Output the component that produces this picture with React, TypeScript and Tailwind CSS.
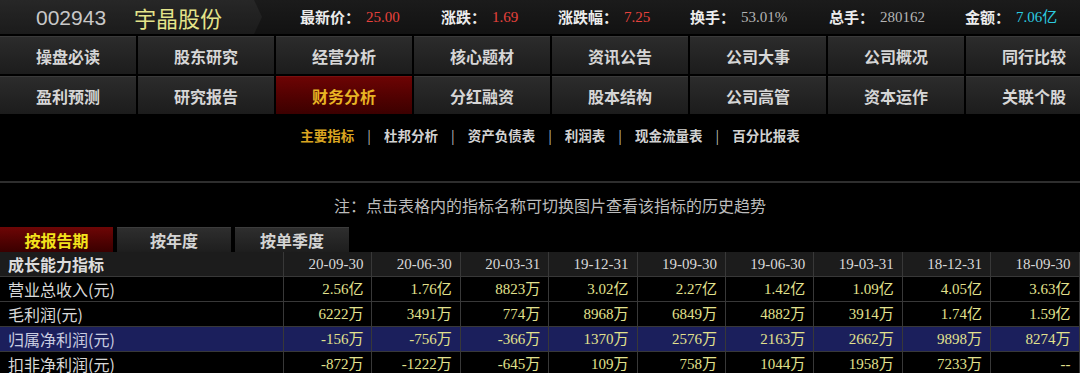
import React from "react";

const stats = [
  { label: "最新价：", value: "25.00", color: "text-[#e8423c]", w: "w-[141px]" },
  { label: "涨跌：", value: "1.69", color: "text-[#e8423c]", w: "w-[117px]" },
  { label: "涨跌幅：", value: "7.25", color: "text-[#e8423c]", w: "w-[132px]" },
  { label: "换手：", value: "53.01%", color: "text-[#b4b4b4]", w: "w-[139px]" },
  { label: "总手：", value: "280162", color: "text-[#b4b4b4]", w: "w-[136px]" },
  { label: "金额：", value: "7.06亿", color: "text-[#2ccbe0]", w: "w-[115px]" },
];

const navRows = [
  ["操盘必读", "股东研究", "经营分析", "核心题材", "资讯公告", "公司大事", "公司概况", "同行比较"],
  ["盈利预测", "研究报告", "财务分析", "分红融资", "股本结构", "公司高管", "资本运作", "关联个股"],
];

const subNav = ["主要指标", "杜邦分析", "资产负债表", "利润表", "现金流量表", "百分比报表"];

const tabs = ["按报告期", "按年度", "按单季度"];

const dates = ["20-09-30", "20-06-30", "20-03-31", "19-12-31", "19-09-30", "19-06-30", "19-03-31", "18-12-31", "18-09-30"];

const rows = [
  { name: "营业总收入(元)", values: ["2.56亿", "1.76亿", "8823万", "3.02亿", "2.27亿", "1.42亿", "1.09亿", "4.05亿", "3.63亿"] },
  { name: "毛利润(元)", values: ["6222万", "3491万", "774万", "8968万", "6849万", "4882万", "3914万", "1.74亿", "1.59亿"] },
  { name: "归属净利润(元)", values: ["-156万", "-756万", "-366万", "1370万", "2576万", "2163万", "2662万", "9898万", "8274万"], active: true },
  { name: "扣非净利润(元)", values: ["-872万", "-1222万", "-645万", "109万", "758万", "1044万", "1958万", "7233万", "--"] },
];

const cjk = "font-['Noto_Sans_CJK_SC',sans-serif]";
const serif = "font-['Liberation_Serif','Noto_Sans_CJK_SC',serif]";

export default function App() {
  return (
    <div className={`w-[1080px] h-[373px] overflow-hidden bg-black ${cjk}`}>
      <div className="w-[1100px]">
        {/* Header */}
        <div className="h-[34px] flex bg-gradient-to-b from-[#1b1b1b] to-[#121212]">
          <div className="w-[262px] h-full flex items-center bg-gradient-to-b from-[#272727] to-[#1b1b1b] [clip-path:polygon(0_0,254px_0,262px_50%,254px_100%,0_100%)]">
            <span className="ml-[36px] text-[21px] leading-none text-[#c8c8c8] font-['Liberation_Sans',sans-serif]">002943</span>
            <span className="ml-[28px] text-[22px] leading-none text-[#e4e48a]">宇晶股份</span>
          </div>
          <div className="flex items-center pl-[38px]">
            {stats.map((s) => (
              <div key={s.label} className={`${s.w} flex items-center`}>
                <span className="text-[15px] font-bold text-[#ececec]">{s.label}</span>
                <span className={`ml-[6px] text-[15px] ${serif} ${s.color}`}>{s.value}</span>
              </div>
            ))}
          </div>
        </div>

        {/* Nav buttons */}
        <div className="mt-[2px] flex flex-col gap-[2px]">
          {navRows.map((row, i) => (
            <div key={i} className="grid grid-cols-[repeat(8,136px)] gap-x-[2px]">
              {row.map((t) => {
                const active = t === "财务分析";
                return (
                  <div
                    key={t}
                    className={
                      active
                        ? "h-[38px] flex items-center justify-center bg-gradient-to-b from-[#6c0404] to-[#3c0000] border-t border-[#7a1010] text-[16px] font-semibold text-[#e8b424]"
                        : "h-[38px] flex items-center justify-center bg-gradient-to-b from-[#2c2c2c] to-[#1c1c1c] border-t border-[#3a3a3a] text-[16px] font-semibold text-[#d6d6d6]"
                    }
                  >
                    {t}
                  </div>
                );
              })}
            </div>
          ))}
        </div>

        {/* Sub nav */}
        <div className="h-[67px] flex items-start justify-center gap-[13px] pt-[11px] text-[13.5px] font-bold">
          {subNav.map((t, i) => (
            <React.Fragment key={t}>
              {i > 0 && <span className="text-[#bdbdbd] font-normal">|</span>}
              <span className={i === 0 ? "text-[#d9a520]" : "text-[#d2d2d2]"}>{t}</span>
            </React.Fragment>
          ))}
        </div>
        <div className="h-[2px] bg-[#2e2e2e]" />

        {/* Note */}
        <div className="h-[44px] flex items-center justify-center text-[16px] text-[#bcbcbc]">
          注：点击表格内的指标名称可切换图片查看该指标的历史趋势
        </div>
      </div>

      {/* Tabs */}
      <div className="flex gap-[4px] h-[25px]">
        {tabs.map((t, i) => (
          <div
            key={t}
            className={
              i === 0
                ? "w-[113px] flex items-center justify-center bg-gradient-to-b from-[#6e0606] to-[#3a0000] text-[16px] font-bold text-[#f2e21c]"
                : "w-[114px] flex items-center justify-center bg-gradient-to-b from-[#2e2e2e] to-[#1e1e1e] border-t border-[#3c3c3c] text-[16px] font-bold text-[#d4d4d4]"
            }
          >
            {t}
          </div>
        ))}
      </div>

      {/* Table */}
      <div className="w-[1100px]">
        <div className="grid grid-cols-[284px_repeat(9,88.4px)] h-[25px] bg-[#1c1c1c] border-b border-[#383838]">
          <div className="flex items-center pl-[8px] text-[16px] font-bold text-[#dcdcdc] border-r border-[#383838]">成长能力指标</div>
          {dates.map((d) => (
            <div key={d} className={`flex items-center justify-end pr-[8px] text-[15px] ${serif} text-[#d8d8d8] border-r border-[#383838]`}>
              {d}
            </div>
          ))}
        </div>
        {rows.map((r) => (
          <div
            key={r.name}
            className={`grid grid-cols-[284px_repeat(9,88.4px)] h-[25px] border-b border-[#383838] ${r.active ? "bg-[#1b1f5c]" : "bg-black"}`}
          >
            <div className={`flex items-center pl-[8px] text-[16px] border-r border-[#383838] ${r.active ? "text-[#c9cce0]" : "text-[#d8d8d8]"}`}>
              {r.name}
            </div>
            {r.values.map((v, j) => (
              <div key={j} className={`flex items-center justify-end pr-[8px] text-[15px] ${serif} text-[#e2e28e] border-r border-[#383838]`}>
                {v}
              </div>
            ))}
          </div>
        ))}
      </div>
    </div>
  );
}
